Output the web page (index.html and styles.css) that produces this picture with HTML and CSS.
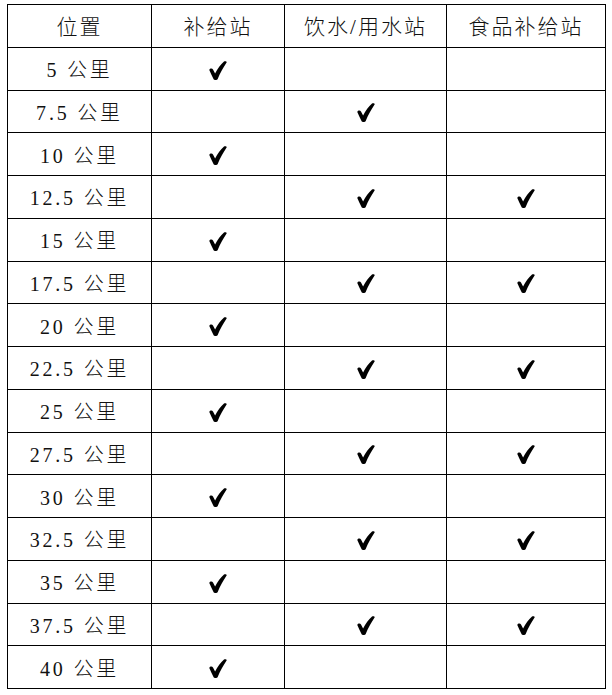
FILE: index.html
```html
<!DOCTYPE html>
<html lang="zh">
<head>
<meta charset="utf-8">
<link rel="stylesheet" href="styles.css">
</head>
<body>
<svg width="0" height="0" class="defs" aria-hidden="true">
  <defs>
    <symbol id="chk" viewBox="0 0 18 19">
      <path d="M0.3 9 C0.8 7.4 3.2 7 4 8.6 L6.1 12.6 C8.6 7.9 11.6 3.5 15 0.6 C16 -0.1 18.1 0.3 17.6 1.5 C14.5 6.1 11.1 12 8.7 18 C8.1 19.3 5.1 19.3 4.5 18 C3.1 14.8 1.5 12 0.3 9 Z" fill="#000"/>
    </symbol>
  </defs>
</svg>
<table class="stations">
  <colgroup>
    <col class="c1"><col class="c2"><col class="c3"><col class="c4">
  </colgroup>
  <thead>
    <tr><th>位置</th><th>补给站</th><th>饮水/用水站</th><th>食品补给站</th></tr>
  </thead>
  <tbody>
    <tr><td class="km">5 公里</td><td class="ok"><svg class="ck"><use href="#chk"/></svg></td><td></td><td></td></tr>
    <tr><td class="km">7.5 公里</td><td></td><td class="ok"><svg class="ck"><use href="#chk"/></svg></td><td></td></tr>
    <tr><td class="km">10 公里</td><td class="ok"><svg class="ck"><use href="#chk"/></svg></td><td></td><td></td></tr>
    <tr><td class="km">12.5 公里</td><td></td><td class="ok"><svg class="ck"><use href="#chk"/></svg></td><td class="ok"><svg class="ck"><use href="#chk"/></svg></td></tr>
    <tr><td class="km">15 公里</td><td class="ok"><svg class="ck"><use href="#chk"/></svg></td><td></td><td></td></tr>
    <tr><td class="km">17.5 公里</td><td></td><td class="ok"><svg class="ck"><use href="#chk"/></svg></td><td class="ok"><svg class="ck"><use href="#chk"/></svg></td></tr>
    <tr><td class="km">20 公里</td><td class="ok"><svg class="ck"><use href="#chk"/></svg></td><td></td><td></td></tr>
    <tr><td class="km">22.5 公里</td><td></td><td class="ok"><svg class="ck"><use href="#chk"/></svg></td><td class="ok"><svg class="ck"><use href="#chk"/></svg></td></tr>
    <tr><td class="km">25 公里</td><td class="ok"><svg class="ck"><use href="#chk"/></svg></td><td></td><td></td></tr>
    <tr><td class="km">27.5 公里</td><td></td><td class="ok"><svg class="ck"><use href="#chk"/></svg></td><td class="ok"><svg class="ck"><use href="#chk"/></svg></td></tr>
    <tr><td class="km">30 公里</td><td class="ok"><svg class="ck"><use href="#chk"/></svg></td><td></td><td></td></tr>
    <tr><td class="km">32.5 公里</td><td></td><td class="ok"><svg class="ck"><use href="#chk"/></svg></td><td class="ok"><svg class="ck"><use href="#chk"/></svg></td></tr>
    <tr><td class="km">35 公里</td><td class="ok"><svg class="ck"><use href="#chk"/></svg></td><td></td><td></td></tr>
    <tr><td class="km">37.5 公里</td><td></td><td class="ok"><svg class="ck"><use href="#chk"/></svg></td><td class="ok"><svg class="ck"><use href="#chk"/></svg></td></tr>
    <tr><td class="km">40 公里</td><td class="ok"><svg class="ck"><use href="#chk"/></svg></td><td></td><td></td></tr>
  </tbody>
</table>
</body>
</html>
```
FILE: styles.css
```css
html, body {
  margin: 0;
  padding: 0;
  background: #ffffff;
}
body {
  padding: 4px 0 0 7px;
  font-family: "Liberation Serif", "Noto Sans CJK SC", serif;
  color: #111111;
}
.defs {
  display: block;
  width: 0;
  height: 0;
  overflow: hidden;
}
.stations {
  border-collapse: collapse;
  table-layout: fixed;
  width: 598px;
}
.c1 { width: 144px; }
.c2 { width: 133px; }
.c3 { width: 162px; }
.c4 { width: 159px; }
.stations th,
.stations td {
  border: 1.4px solid #000000;
  height: 42.75px;
  padding: 3px 0 0 0;
  box-sizing: border-box;
  text-align: center;
  vertical-align: middle;
  line-height: 1;
}
.stations th {
  font-weight: 300;
  font-size: 21px;
  letter-spacing: 2px;
}
.km {
  font-size: 20px;
  letter-spacing: 2.8px;
  font-weight: 300;
}
.ok {
  line-height: 0;
}
.ck {
  width: 18px;
  height: 19px;
  display: inline-block;
  vertical-align: middle;
}
```
